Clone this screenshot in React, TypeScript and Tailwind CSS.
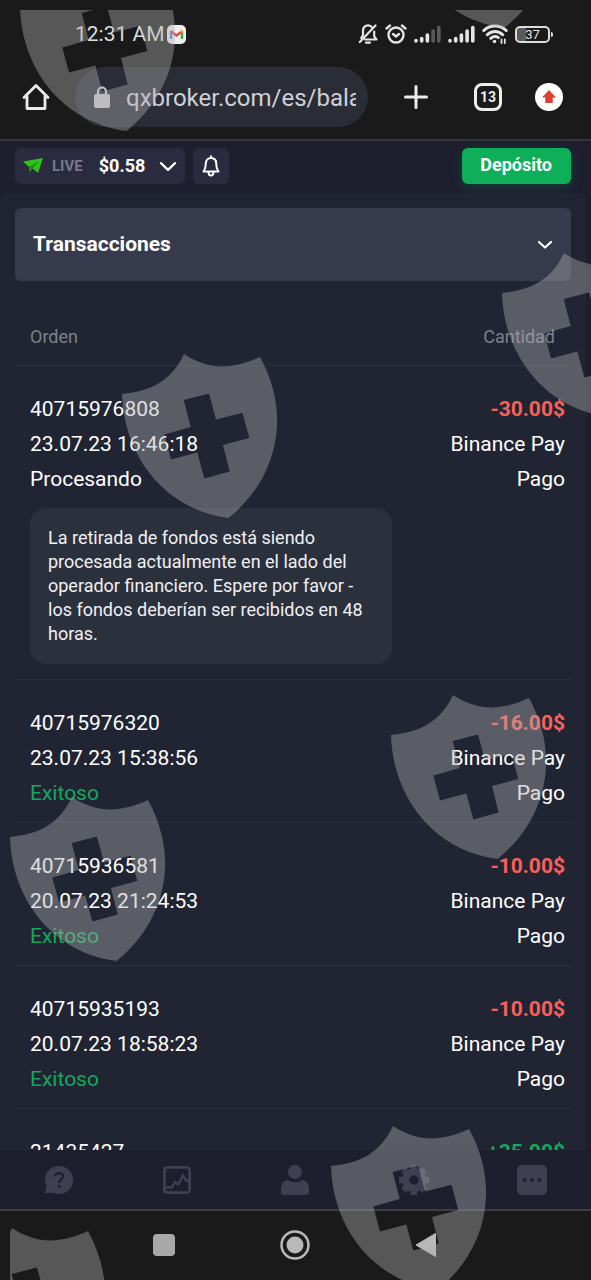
import { useState } from 'react';

type Transaction = {
  id: string;
  amount: string;
  date?: string;
  status?: string;
  method?: string;
  type?: string;
  note?: string;
};

const transactions: Transaction[] = [
  {
    id: '40715976808',
    date: '23.07.23 16:46:18',
    status: 'Procesando',
    amount: '-30.00$',
    method: 'Binance Pay',
    type: 'Pago',
    note: 'La retirada de fondos está siendo procesada actualmente en el lado del operador financiero. Espere por favor - los fondos deberían ser recibidos en 48 horas.',
  },
  { id: '40715976320', date: '23.07.23 15:38:56', status: 'Exitoso', amount: '-16.00$', method: 'Binance Pay', type: 'Pago' },
  { id: '40715936581', date: '20.07.23 21:24:53', status: 'Exitoso', amount: '-10.00$', method: 'Binance Pay', type: 'Pago' },
  { id: '40715935193', date: '20.07.23 18:58:23', status: 'Exitoso', amount: '-10.00$', method: 'Binance Pay', type: 'Pago' },
  { id: '21435427', amount: '+35.00$' },
];

// top left corner of every shield
const shields = [
  [20, -33],
  [398, -136],
  [502, 253],
  [122, 354],
  [391, 695],
  [10, 797],
  [331, 1126],
  [-50, 1228],
];

function Signal({ weak = false }: { weak?: boolean }) {
  return (
    <svg className="h-[18px] w-[27px]" viewBox="0 0 27 18" stroke="#e4e4e4" strokeWidth="3.6" strokeLinecap="round">
      <path d="M2 16v-.5M7.700 16v-2.500M13.400 16v-6" />
      <path d="M19.100 16V6M24.800 16V2.500" stroke={weak ? '#5a5a5a' : '#e4e4e4'} />
    </svg>
  );
}

function StatusBar() {
  return (
    <div className="flex h-14 shrink-0 items-center justify-between pl-[75px] pr-[38px] pt-3">
      <div className="flex items-center gap-[2px]">
        <span className="text-[21px] leading-6 text-[#dedede]">12:31 AM</span>
        <svg className="size-[19px]" viewBox="0 0 19 19">
          <rect width="19" height="19" rx="5" fill="#efefef" />
          <path d="M4 14V6.500" stroke="#4285f4" strokeWidth="2.400" />
          <path d="M15 14V6.500" stroke="#34a853" strokeWidth="2.400" />
          <path d="M3.600 6l5.900 4.600L15.400 6" fill="none" stroke="#ea4335" strokeWidth="2.400" />
          <path d="M14 7.200l1.800-1.500" stroke="#fbbc04" strokeWidth="2.400" />
        </svg>
      </div>
      <div className="flex items-center gap-[7px]">
        <svg className="h-5 w-[20px]" viewBox="0 0 20 20" fill="none" stroke="#e4e4e4" strokeWidth="2.200" strokeLinecap="round" strokeLinejoin="round">
          <path d="M13.500 2.800A5 5 0 0 0 5 6.500v4.500L3.300 14M7 15.500h11.500l-2.300-3V7.500M1.800 18L17.500 1.500" />
          <path d="M8 18.600h4" />
        </svg>
        <svg className="h-5 w-[22px]" viewBox="0 0 22 20" fill="none" stroke="#e4e4e4" strokeWidth="2.400" strokeLinecap="round" strokeLinejoin="round">
          <circle cx="11" cy="11" r="7.500" />
          <path d="M1.500 4.500L5 1.500M20.500 4.500L17 1.500M8 10l3 2.500 3-2.500" />
        </svg>
        <Signal weak />
        <Signal />
        <svg className="h-5 w-[26px]" viewBox="0 0 26 20" fill="none" stroke="#e4e4e4" strokeWidth="3" strokeLinecap="round">
          <path d="M1.800 6.500a16 16 0 0 1 22.400 0M5.300 10.700a11 11 0 0 1 15.400 0M8.800 14.300a6.500 6.500 0 0 1 7.500-.8" />
          <circle cx="12.500" cy="17.500" r="1.800" fill="#e4e4e4" stroke="none" />
          <path d="M19.500 19v-3.500M22.800 15.500V19" strokeWidth="1.800" />
        </svg>
        <div className="flex items-center gap-px">
          <div className="flex h-[17px] w-[35px] items-center justify-center rounded-[5px] border-2 border-[#dcdcdc] bg-linear-to-r from-[#5a5a5a] from-30% to-transparent to-30% pt-px text-[13px] leading-3 text-[#e4e4e4]">
            37
          </div>
          <div className="h-[5px] w-[2px] rounded-r bg-[#dcdcdc]" />
        </div>
      </div>
    </div>
  );
}

function BrowserBar() {
  return (
    <div className="flex shrink-0 items-center border-b-2 border-[#36363e] pb-3 pl-[22px] pr-7 pt-[11px]">
      <button aria-label="Inicio">
        <svg className="size-7" viewBox="0 0 28 28" fill="none" stroke="#ececec" strokeWidth="2.800" strokeLinejoin="round" strokeLinecap="round">
          <path d="M2 14.500L14 2.500l12 12M5 13v12.500h18V13" />
        </svg>
      </button>
      <div className="ml-[25px] flex h-[60px] min-w-0 flex-1 items-center rounded-full bg-[#2a2c36] pl-[19px] pr-3">
        <svg className="h-[22px] w-4 shrink-0" viewBox="0 0 16 22">
          <rect y="8" width="16" height="14" rx="2" fill="#c9c9cf" />
          <path d="M4 9V5.500a4 4 0 0 1 8 0V9" fill="none" stroke="#c9c9cf" strokeWidth="2.200" />
        </svg>
        <input
          aria-label="Dirección"
          defaultValue="qxbroker.com/es/balance"
          className="ml-4 min-w-0 flex-1 bg-transparent pt-[2px] text-[24px] leading-8 text-[#d0d1d6] outline-none"
        />
      </div>
      <button aria-label="Nueva pestaña" className="ml-9">
        <svg className="size-6" viewBox="0 0 24 24" stroke="#ececec" strokeWidth="3" strokeLinecap="round">
          <path d="M12 1.500v21M1.500 12h21" />
        </svg>
      </button>
      <button className="ml-[46px] flex size-7 items-center justify-center rounded-lg border-3 border-[#ececec] text-[14px] font-bold leading-4 text-[#ececec]">
        13
      </button>
      <button aria-label="Actualizar" className="ml-[33px] flex size-7 items-center justify-center rounded-full bg-white">
        <svg className="size-4" viewBox="0 0 16 16" fill="#d93f33">
          <path d="M8 1l7 7.500h-3.300V14H4.300V8.500H1z" />
        </svg>
      </button>
    </div>
  );
}

function AppHeader() {
  return (
    <header className="flex shrink-0 items-center gap-2 pb-[9px] pl-[15px] pr-5 pt-[7px]">
      <button className="flex h-9 items-center rounded-md bg-[#2a2b3f] px-2">
        <svg className="h-4 w-5" viewBox="0 0 20 16">
          <path d="M0 3.500L20 0l-5 15-5.500-4.500-3 3.500-.5-5z" fill="#2fc11b" />
          <path d="M6 9l10-6-6.500 7.500-3 3.500z" fill="#1b8a12" />
        </svg>
        <span className="ml-[9px] text-[15px] font-bold leading-6 text-[#77788b]">LIVE</span>
        <span className="ml-4 text-[18px] font-bold leading-6 text-white">$0.58</span>
        <svg className="ml-[14px] h-[11px] w-[18px]" viewBox="0 0 19 11" fill="none" stroke="#fff" strokeWidth="2.400" strokeLinecap="round" strokeLinejoin="round">
          <path d="M2 2l7.500 7L17 2" />
        </svg>
      </button>
      <button aria-label="Notificaciones" className="flex size-9 items-center justify-center rounded-md bg-[#2a2b3f]">
        <svg className="h-[22px] w-[18px]" viewBox="0 0 18 22" fill="none" stroke="#fff" strokeWidth="2" strokeLinecap="round" strokeLinejoin="round">
          <path d="M9 3C5.500 3 3.800 5.500 3.800 8.500c0 4.500-.8 6-2.300 8h15c-1.500-2-2.300-3.500-2.300-8C14.200 5.500 12.500 3 9 3zM9 3V1.300M6.500 17c0 4.800 5 4.800 5 0" />
        </svg>
      </button>
      <button className="ml-auto h-9 rounded-md bg-[#0faf59] pb-[2px] pl-[18px] pr-[19px] text-[18px] font-bold leading-6 text-white shadow-[0_3px_14px_rgba(15,175,89,0.22)]">
        Depósito
      </button>
    </header>
  );
}

function TransactionRow({ item }: { item: Transaction }) {
  return (
    <tr className="border-b border-[#2a2f3c] align-top">
      <td className="pb-[11px] pl-[15px] pt-[26px]">
        <div>{item.id}</div>
        {item.date && <div>{item.date}</div>}
        {item.status && <div className={item.status === 'Exitoso' ? 'text-[#12a85a]' : ''}>{item.status}</div>}
        {item.note && (
          <p className="mb-1 mt-[11px] max-w-[362px] rounded-2xl bg-[#2b303d] p-[18px] text-[18px] leading-6 text-[#f0f1f4]">
            {item.note}
          </p>
        )}
      </td>
      <td className="whitespace-nowrap pb-[11px] pr-[6px] pt-[26px] text-right">
        <div className={item.amount.startsWith('-') ? 'font-bold text-[#fa6058]' : 'font-bold text-[#12a85a]'}>{item.amount}</div>
        {item.method && <div>{item.method}</div>}
        {item.type && <div>{item.type}</div>}
      </td>
    </tr>
  );
}

function Transactions() {
  const [open, setOpen] = useState(true);

  return (
    <main className="mr-[5px] min-h-0 flex-1 overflow-hidden rounded-t-lg bg-[#212533] pl-[15px] pr-[15px] pt-[15px]">
      <button
        onClick={() => setOpen(!open)}
        className="flex h-[73px] w-full items-center justify-between rounded-md bg-[#373a4d] pl-[18px] pr-[18px] text-[21px] font-bold text-white"
      >
        Transacciones
        <svg className="h-[10px] w-4" viewBox="0 0 16 10" fill="none" stroke="#fff" strokeWidth="2.200" strokeLinecap="round" strokeLinejoin="round">
          <path d="M2 2l6 5.500L14 2" />
        </svg>
      </button>
      {open && (
        <table className="mt-11 w-full border-collapse text-[21px] leading-[35px] text-white">
          <thead>
            <tr className="border-b border-[#2a2f3c] text-[18px] leading-6 text-[#7d808d]">
              <th className="pb-4 pl-[15px] text-left font-normal">Orden</th>
              <th className="pb-4 pr-4 text-right font-normal">Cantidad</th>
            </tr>
          </thead>
          <tbody>
            {transactions.map((item) => (
              <TransactionRow key={item.id} item={item} />
            ))}
          </tbody>
        </table>
      )}
    </main>
  );
}

function BottomNav() {
  return (
    <nav className="grid h-[61px] shrink-0 grid-cols-5 items-center justify-items-center border-b-2 border-[#3d3d44] text-[#3e4052]">
      <button aria-label="Ayuda">
        <svg className="size-7" viewBox="0 0 28 28">
          <path d="M14 0a14 14 0 1 1-5 27H0l1.500-6.500A14 14 0 0 1 14 0z" fill="currentColor" />
          <path d="M10.300 10.500c.2-4.500 8-4.500 7.700 0-.2 3-3.800 3-3.800 6.500" fill="none" stroke="#1e1f2f" strokeWidth="2.200" />
          <circle cx="14.200" cy="20.500" r="1.500" fill="#1e1f2f" />
        </svg>
      </button>
      <button aria-label="Gráfico">
        <svg className="size-7" viewBox="0 0 28 28" fill="none" stroke="currentColor" strokeWidth="2.800" strokeLinejoin="round">
          <rect x="1.400" y="1.400" width="25.200" height="25.200" rx="3" />
          <path d="M3 21.500h6l3-5.500 3.500 2.500L20 9l3 5.500h3" strokeWidth="2.400" />
        </svg>
      </button>
      <button aria-label="Cuenta">
        <svg className="h-[30px] w-7" viewBox="0 0 28 30" fill="currentColor">
          <circle cx="14" cy="7" r="7" />
          <path d="M7 15c4 3 10 3 14 0 4.500 0 7 4 7 9v3a3 3 0 0 1-3 3H3a3 3 0 0 1-3-3v-3c0-5 2.500-9 7-9z" />
        </svg>
      </button>
      <button aria-label="Ajustes">
        <svg className="size-[30px]" viewBox="0 0 30 30" fill="none" stroke="currentColor">
          <circle cx="15" cy="15" r="8.300" strokeWidth="7.500" />
          <path d="M15 5V0M15 25v5M5 15H0M25 15h5M8 8L4.600 4.600M22 8l3.400-3.400M8 22l-3.400 3.400M22 22l3.400 3.400" strokeWidth="6.500" />
        </svg>
      </button>
      <button aria-label="Más">
        <svg className="size-[30px]" viewBox="0 0 30 30">
          <rect width="30" height="30" rx="5" fill="currentColor" />
          <g fill="#1e1f2f">
            <circle cx="7.500" cy="15" r="2" />
            <circle cx="15" cy="15" r="2" />
            <circle cx="22.500" cy="15" r="2" />
          </g>
        </svg>
      </button>
    </nav>
  );
}

function SystemNav() {
  return (
    <div className="flex h-[69px] shrink-0 items-center justify-between bg-[#1a1a1a] pb-[2px] pl-[153px] pr-[154px]">
      <button aria-label="Recientes" className="size-[22px] rounded bg-[#a9a9a9]" />
      <button aria-label="Pantalla de inicio">
        <svg className="size-[30px]" viewBox="0 0 30 30">
          <circle cx="15" cy="15" r="13.500" fill="none" stroke="#b9b9b9" strokeWidth="2.500" />
          <circle cx="15" cy="15" r="8.500" fill="#b9b9b9" />
        </svg>
      </button>
      <button aria-label="Atrás">
        <svg className="h-[26px] w-[22px]" viewBox="0 0 22 26">
          <path d="M20.500 1.500v23L1 13z" fill="#b9b9b9" stroke="#b9b9b9" strokeLinejoin="round" />
        </svg>
      </button>
    </div>
  );
}

function Watermark() {
  return (
    <div className="pointer-events-none absolute bottom-0 left-[10px] right-0 top-[10px] overflow-hidden">
      <svg className="size-full" fill="#b0b0b0" fillOpacity="0.41" fillRule="evenodd">
        {shields.map(([x, y]) => (
          <path
            key={`${x},${y}`}
            transform={`translate(${x - 10} ${y - 10})`}
            d="M62 0C86 16 110 16 138 3C150 25 156 48 155 72C153 110 134 142 106.500 164C45 156 2 105 0 40C30 37 50 26 62 0ZM61.700 46L87 39.500L94 65.500L120.500 58.700L127.300 84L101 91L107.700 117.500L82.300 124.500L75.300 98.500L49 105.500L42.300 80.500L68.700 73Z"
          />
        ))}
      </svg>
    </div>
  );
}

export default function App() {
  return (
    <div className="relative flex h-screen flex-col overflow-hidden bg-[#1a1a1a] font-['Roboto',sans-serif]">
      <StatusBar />
      <BrowserBar />
      <div className="flex min-h-0 flex-1 flex-col bg-[#1d1e2e]">
        <AppHeader />
        <Transactions />
        <BottomNav />
      </div>
      <SystemNav />
      <Watermark />
    </div>
  );
}
